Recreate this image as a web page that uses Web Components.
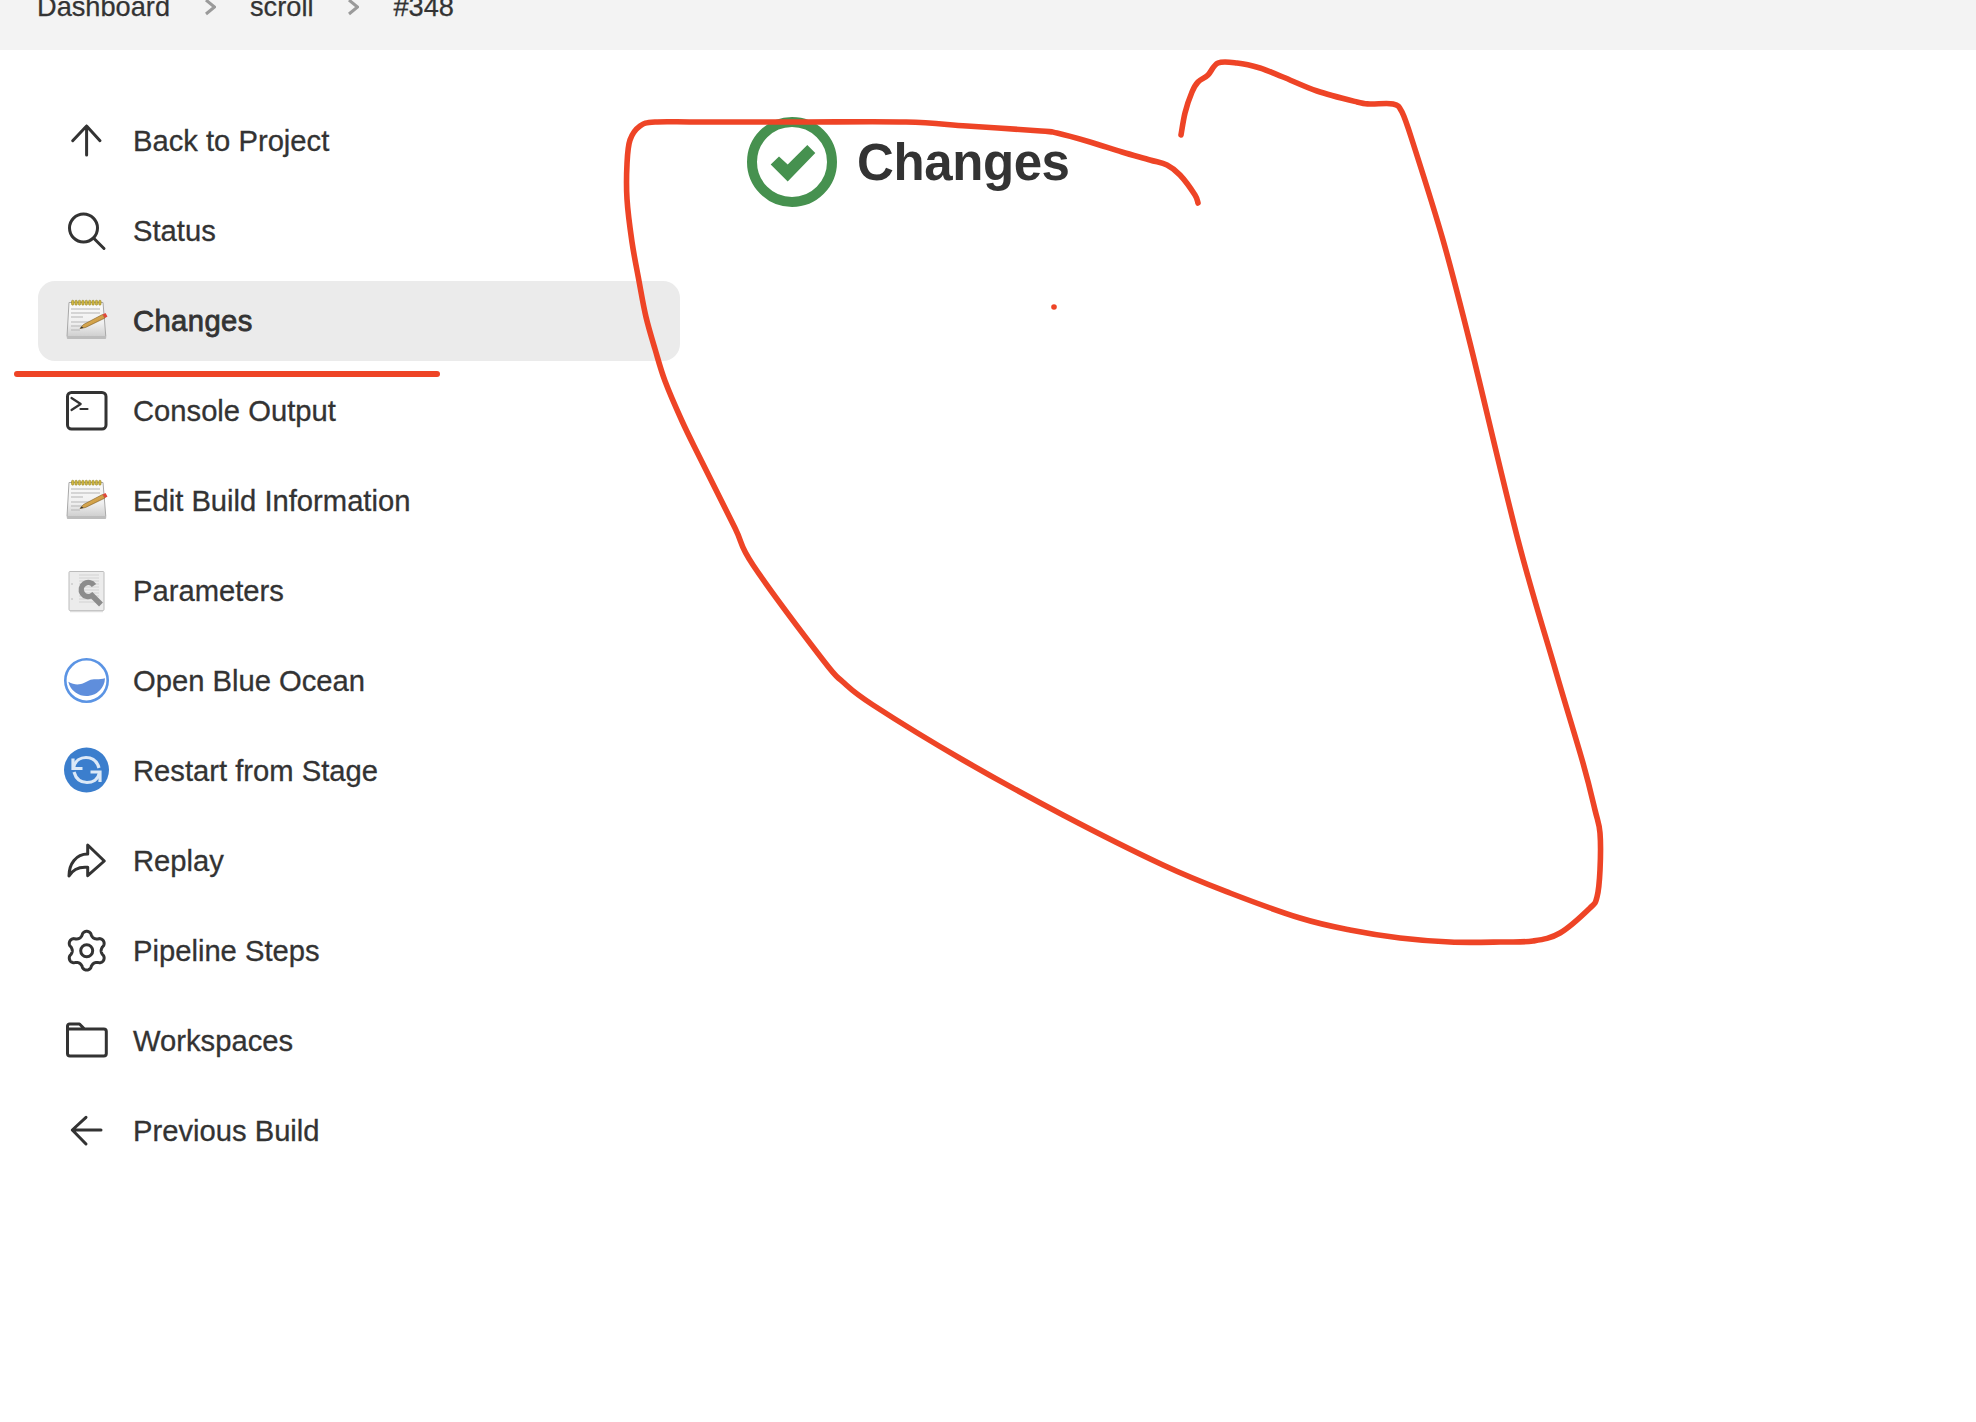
<!DOCTYPE html>
<html>
<head>
<meta charset="utf-8">
<title>Changes</title>
<style>
html, body { margin: 0; background: #fff; overflow: hidden; }
body { height: 1422px; position: relative; font-family: "Liberation Sans", Arial, sans-serif; color: #333; }
</style>
</head>
<body>
<jk-breadcrumbs>
  <jk-crumb>Dashboard</jk-crumb>
  <jk-crumb>scroll</jk-crumb>
  <jk-crumb>#348</jk-crumb>
</jk-breadcrumbs>
<jk-layout>
  <jk-sidenav slot="side">
    <jk-navitem icon="up">Back to Project</jk-navitem>
    <jk-navitem icon="search">Status</jk-navitem>
    <jk-navitem icon="notepad" active>Changes</jk-navitem>
    <jk-navitem icon="console">Console Output</jk-navitem>
    <jk-navitem icon="notepad">Edit Build Information</jk-navitem>
    <jk-navitem icon="params">Parameters</jk-navitem>
    <jk-navitem icon="ocean">Open Blue Ocean</jk-navitem>
    <jk-navitem icon="restart">Restart from Stage</jk-navitem>
    <jk-navitem icon="replay">Replay</jk-navitem>
    <jk-navitem icon="gear">Pipeline Steps</jk-navitem>
    <jk-navitem icon="folder">Workspaces</jk-navitem>
    <jk-navitem icon="back">Previous Build</jk-navitem>
  </jk-sidenav>
  <jk-heading>Changes</jk-heading>
</jk-layout>
<jk-ink></jk-ink>

<script>
const line = 'fill="none" stroke="#333" stroke-width="3" stroke-linecap="round" stroke-linejoin="round"';

// six lobes starting at the top, the power flattens the lobes a bit
function gearPath() {
  let d = '';
  for (let i = 0; i <= 240; i++) {
    const t = i / 240 * Math.PI * 2;
    const c = Math.cos(6 * t);
    const r = 16.9 + 2.5 * Math.sign(c) * Math.pow(Math.abs(c), .7);
    const x = 22.7 + r * Math.sin(t);
    const y = 21.7 - r * Math.cos(t);
    d += (i ? 'L' : 'M') + x.toFixed(2) + ' ' + y.toFixed(2);
  }
  return d + 'Z';
}

function notepad(id) {
  let rings = '';
  for (let x = 7.5; x <= 35; x += 3.4) {
    rings += `<rect x="${x}" y="1.2" width="2.4" height="5" rx="1.2" fill="#d2b83f" stroke="#8a7a20" stroke-width=".5"/>`;
  }
  return `
    <defs>
      <linearGradient id="${id}" x1="0" y1="0" x2="0" y2="1">
        <stop offset="0" stop-color="#fbfbfb"/><stop offset=".6" stop-color="#f0f0f0"/><stop offset="1" stop-color="#cfcfcf"/>
      </linearGradient>
      <linearGradient id="${id}p" x1="0" y1="0" x2="1" y2="1">
        <stop offset="0" stop-color="#eec56c"/><stop offset="1" stop-color="#b9822c"/>
      </linearGradient>
    </defs>
    <path d="M5 3.5H39L41.8 37.5H3Z" fill="url(#${id})" stroke="#a8a8a8"/>
    <rect x="2.800" y="37" width="39.400" height="3" rx="1" fill="#bdbdbd"/>
    ${rings}
    <path d="M7 10H36M7 14H36M7 18H19M7 23H30M7 27H20M7 31H16" stroke="#b5b5b5" stroke-width="1" fill="none"/>
    <path d="M16 29.500L19.500 25.500L38.500 15.500L41 19L21.500 28.500Z" fill="url(#${id}p)" stroke="#7d5a1c" stroke-width=".6"/>
    <path d="M16 29.500L17.700 27.500L19.500 28.900Z" fill="#333"/>
    <path d="M38.500 15.500L41.500 14L43.500 17.500L41 19Z" fill="#e0483a"/>`;
}

const icons = {
  up: `<path d="M22.600 36V7M8.700 21.700L22.600 7L36 21.700" ${line}/>`,
  search: `<circle cx="19.500" cy="19" r="14" ${line}/><path d="M30 29.500L40 39.500" ${line}/>`,
  console: `<rect x="3.500" y="3.500" width="38.500" height="36.500" rx="4" ${line}/>
    <path d="M7.500 9L16.700 15L7.500 21M16.500 20H23.500" ${line} style="stroke-width:2.200"/>`,
  params: `
    <rect x="5" y="2.500" width="35" height="39" rx="1" fill="#ececec" stroke="#bcbcbc"/>
    <path d="M15 6H35M15 9H35M15 12H35M15 15H35M15 18H35M15 21H35M15 24H35M15 27H35M15 30H35M15 33H33" stroke="#d2d2d2" stroke-width="1.200"/>
    <path d="M8 14V16M8 29V31" stroke="#c4c4c4" stroke-width="1.200"/>
    <path d="M30 16.500A7 7 0 1 0 28 26.500L37 35.500" fill="none" stroke="#8c8c8c" stroke-width="5.500"/>
    <path d="M6 42.500H39" stroke="#ddd" stroke-width="1.500"/>`,
  ocean: `<circle cx="22.500" cy="21.500" r="21.200" fill="#fff" stroke="#5b94e4" stroke-width="2.600"/>
    <path d="M4.300 22.700C9 25.500 13 25.800 17 25C22 24 25 20.300 30 20.300C34 20.300 37 20.500 41 19.300A18.600 18.600 0 0 1 4.300 22.700Z" fill="#5f8edc"/>`,
  restart: `<circle cx="22.500" cy="21" r="22.500" fill="#3b7ecd"/>
    <g fill="none" stroke="#dce9f7" stroke-width="3.200">
      <path d="M9.500 19C11 11 17 8.500 22 8.500C28 8.500 33 12 35 19"/>
      <path d="M9 9.500V19.500H18.500"/>
      <path d="M35.500 23.500C34 31 28 33.500 23 33.500C17 33.500 12 30 10 23"/>
      <path d="M36 33V23H26.500"/>
    </g>`,
  replay: `<path d="M5 37C5 25 12 15 23.700 15V6L40.300 22L23.700 36.700V28.300C15 27.500 9 30 5 37Z" ${line}/>`,
  gear: `<path d="${gearPath()}" ${line}/><circle cx="22.700" cy="21.700" r="6" ${line}/>`,
  folder: `<path d="M3.500 10V7A2 2 0 0 1 5.500 5H15.500L20.500 10M3.500 10H39.800A2.500 2.500 0 0 1 42.300 12.500V34.500A2.500 2.500 0 0 1 39.800 37H6A2.500 2.500 0 0 1 3.500 34.500Z" ${line}/>`,
  back: `<path d="M37 21H8.300M22 8.300L8.300 21L22 35" ${line}/>`
};

let uid = 0;

const crumbTemplate = document.createElement('template');
crumbTemplate.innerHTML = `
<style>
:host { display: flex; align-items: center; gap: 35px; font-size: 27.2px; line-height: 32px; color: #333; -webkit-text-stroke: .25px #333; }
svg { display: block; }
:host(:last-child) svg { display: none; }
</style>
<slot></slot>
<svg width="11" height="18" viewBox="0 0 11 18"><path d="M1 2L9.500 9L1 16" fill="none" stroke="#9a9a9a" stroke-width="3"/></svg>
`;

class JkCrumb extends HTMLElement {
  constructor() {
    super();
    this.attachShadow({ mode: 'open' });
    this.shadowRoot.appendChild(crumbTemplate.content.cloneNode(true));
  }
}
customElements.define('jk-crumb', JkCrumb);

const breadcrumbsTemplate = document.createElement('template');
breadcrumbsTemplate.innerHTML = `
<style>
:host { display: block; height: 50px; background: #f3f3f3; overflow: hidden; }
#row { display: flex; gap: 34px; padding-left: 37px; margin-top: -9px; }
</style>
<div id="row"><slot></slot></div>
`;

class JkBreadcrumbs extends HTMLElement {
  constructor() {
    super();
    this.attachShadow({ mode: 'open' });
    this.shadowRoot.appendChild(breadcrumbsTemplate.content.cloneNode(true));
  }
}
customElements.define('jk-breadcrumbs', JkBreadcrumbs);

const layoutTemplate = document.createElement('template');
layoutTemplate.innerHTML = `
<style>
:host { display: grid; grid-template-columns: 642px 1fr; column-gap: 67px; padding: 51px 0 0 38px; }
</style>
<slot name="side"></slot>
<slot></slot>
`;

class JkLayout extends HTMLElement {
  constructor() {
    super();
    this.attachShadow({ mode: 'open' });
    this.shadowRoot.appendChild(layoutTemplate.content.cloneNode(true));
  }
}
customElements.define('jk-layout', JkLayout);

const sidenavTemplate = document.createElement('template');
sidenavTemplate.innerHTML = `
<style>
:host { display: flex; flex-direction: column; gap: 10px; }
</style>
<slot></slot>
`;

class JkSidenav extends HTMLElement {
  constructor() {
    super();
    this.attachShadow({ mode: 'open' });
    this.shadowRoot.appendChild(sidenavTemplate.content.cloneNode(true));
  }
}
customElements.define('jk-sidenav', JkSidenav);

const navitemTemplate = document.createElement('template');
navitemTemplate.innerHTML = `
<style>
:host { display: flex; align-items: center; gap: 25px; height: 80px; padding-left: 26px; border-radius: 17px; font-size: 29.2px; color: #333; -webkit-text-stroke: .3px #333; }
:host([active]) { background: #ebebeb; letter-spacing: .4px; -webkit-text-stroke: .8px #333; }
svg { display: block; flex: none; overflow: visible; }
</style>
<svg id="icon" width="44" height="44" viewBox="0 0 44 44"></svg>
<span><slot></slot></span>
`;

class JkNavitem extends HTMLElement {
  constructor() {
    super();
    this.attachShadow({ mode: 'open' });
    this.shadowRoot.appendChild(navitemTemplate.content.cloneNode(true));
    this.icon = this.shadowRoot.querySelector('#icon');
  }

  connectedCallback() {
    this.render();
  }

  render() {
    const name = this.getAttribute('icon');
    this.icon.innerHTML = name === 'notepad' ? notepad('np' + uid++) : icons[name];
  }
}
customElements.define('jk-navitem', JkNavitem);

const headingTemplate = document.createElement('template');
headingTemplate.innerHTML = `
<style>
:host { display: flex; align-items: center; gap: 20px; align-self: start; margin-top: 16px; }
h1 { margin: 2px 0 0; font-size: 51px; line-height: 60px; font-weight: 700; letter-spacing: -.4px; color: #333; }
svg { display: block; flex: none; }
</style>
<svg width="90" height="90" viewBox="0 0 90 90">
  <circle cx="45" cy="45" r="40" fill="none" stroke="#46914f" stroke-width="10"/>
  <path d="M23.700 47.600L32 39.400L40.700 47.600L60.300 28L68.300 35.900L40.700 64.400Z" fill="#46914f"/>
</svg>
<h1><slot></slot></h1>
`;

class JkHeading extends HTMLElement {
  constructor() {
    super();
    this.attachShadow({ mode: 'open' });
    this.shadowRoot.appendChild(headingTemplate.content.cloneNode(true));
  }
}
customElements.define('jk-heading', JkHeading);

// freehand annotation scribbled over the screenshot, points in page pixels
const inkPoints = [
  [1181,135],[1185,113],[1192,92],[1198,82],[1208,75],[1218,63],[1237,63],[1260,68],[1283,77],[1317,91],[1357,102],[1370,104],[1393,104],
  [1402,112],[1413,143],[1443,240],[1470,343],[1518,540],[1556,672],[1583,763],[1595,810],[1600,833],[1600,870],
  [1597,897],[1590,908],[1560,933],[1533,941],[1500,942],[1450,942],[1400,938],[1350,930],[1300,918],[1230,893],[1163,865],
  [1063,815],[963,760],[873,705],[843,682],[823,660],[753,565],[735,528],[700,458],
  [682,421],[665,381],[655,349],[646,317],[639,281],[632,242],[627,199],[627,164],[630,140],[640,126],[655,122],[700,122],[800,122],[906,122],
  [967,126],[1041,131],[1057,133],[1090,142],[1122,152],[1150,160],[1167,165],[1180,175],[1195,195],[1198,203]
];

function smooth(pts) {
  let d = `M${pts[0][0]} ${pts[0][1]}`;
  for (let i = 0; i < pts.length - 1; i++) {
    const p0 = pts[i - 1] || pts[i];
    const p1 = pts[i];
    const p2 = pts[i + 1];
    const p3 = pts[i + 2] || p2;
    const c1x = p1[0] + (p2[0] - p0[0]) / 6;
    const c1y = p1[1] + (p2[1] - p0[1]) / 6;
    const c2x = p2[0] - (p3[0] - p1[0]) / 6;
    const c2y = p2[1] - (p3[1] - p1[1]) / 6;
    d += `C${c1x.toFixed(1)} ${c1y.toFixed(1)} ${c2x.toFixed(1)} ${c2y.toFixed(1)} ${p2[0]} ${p2[1]}`;
  }
  return d;
}

class JkInk extends HTMLElement {
  constructor() {
    super();
    this.attachShadow({ mode: 'open' });
    this.shadowRoot.innerHTML = `
      <style>
      :host { position: absolute; left: 0; top: 0; width: 1976px; height: 1422px; pointer-events: none; }
      svg { display: block; }
      </style>
      <svg width="1976" height="1422" viewBox="0 0 1976 1422">
        <g fill="none" stroke="#ee4426" stroke-width="5.600" stroke-linecap="round" stroke-linejoin="round">
          <path d="${smooth(inkPoints)}"/>
          <path d="M17 374H437" stroke-width="6"/>
        </g>
        <circle cx="1054" cy="307" r="2.800" fill="#ee4426"/>
      </svg>`;
  }
}
customElements.define('jk-ink', JkInk);
</script>
</body>
</html>
